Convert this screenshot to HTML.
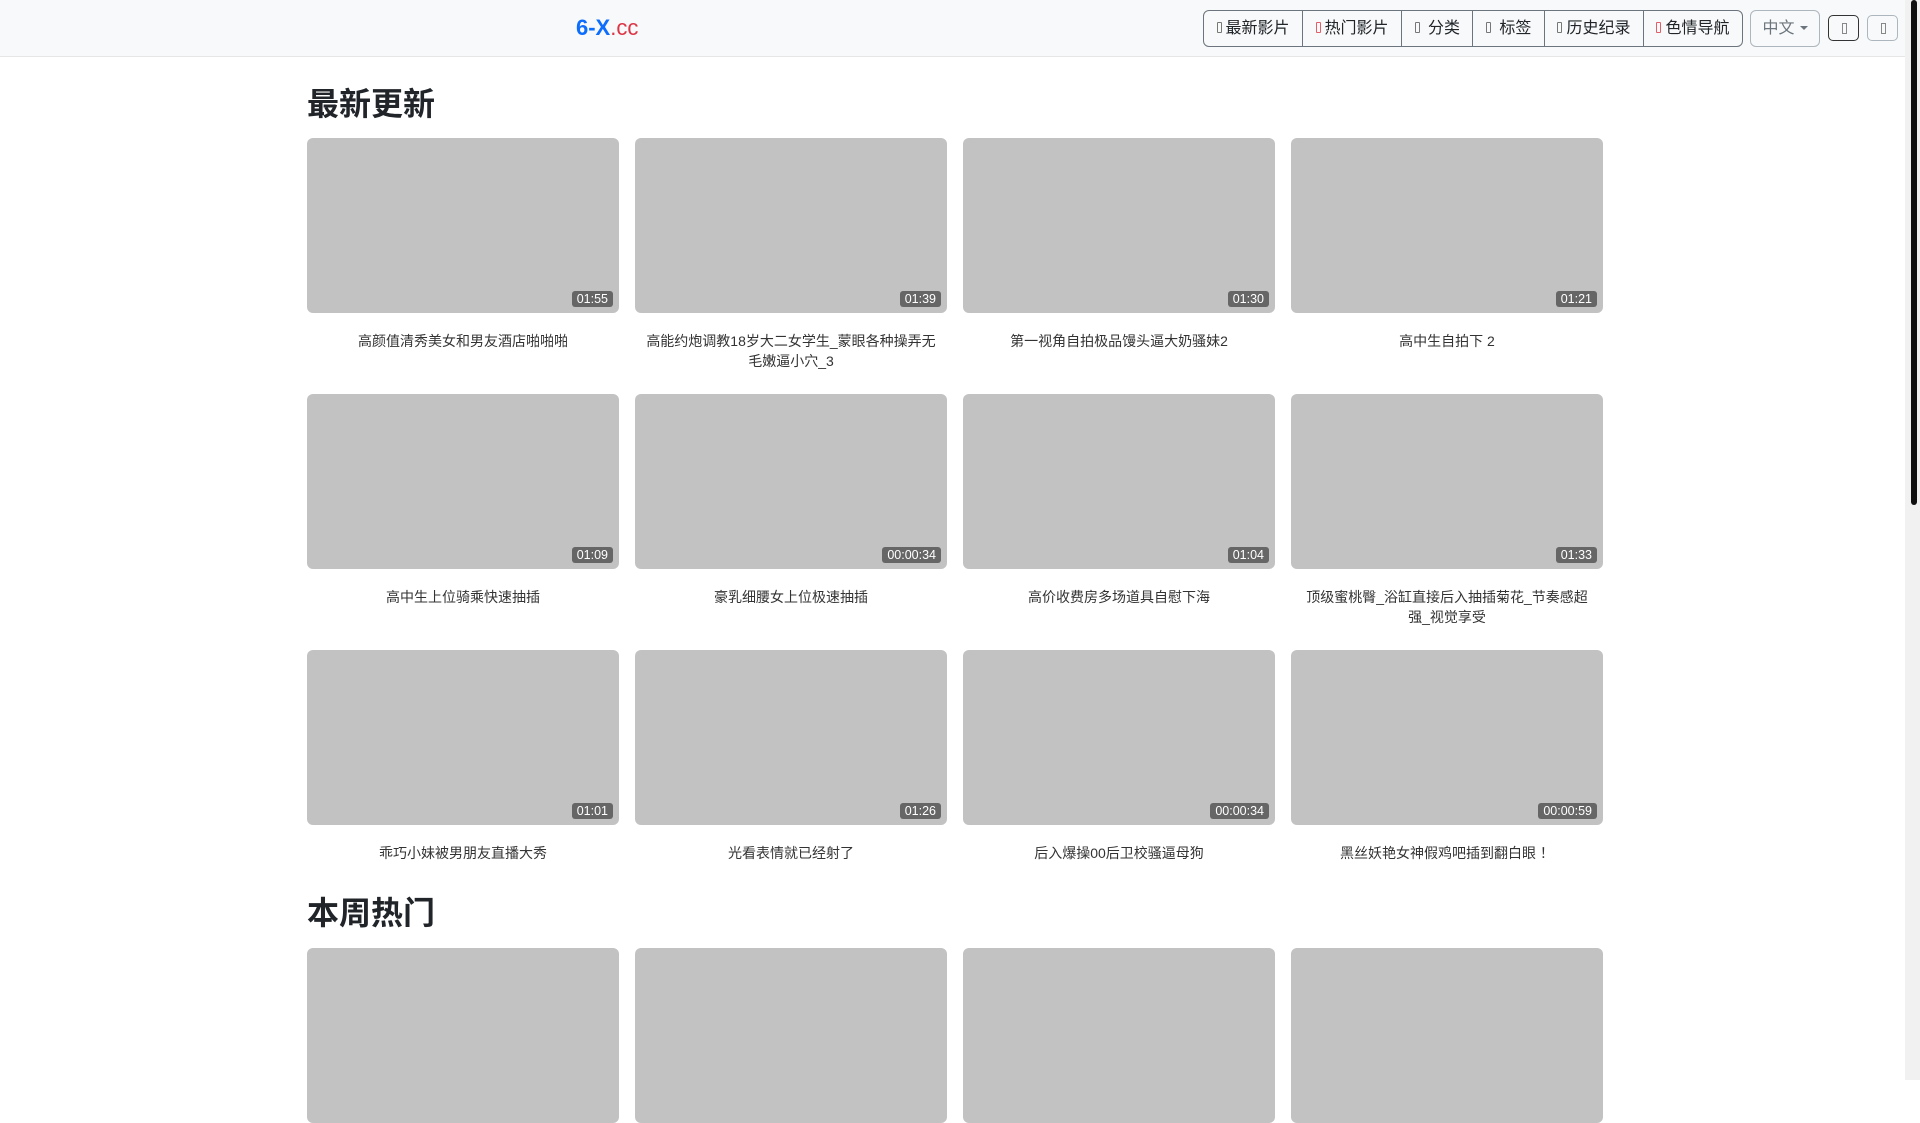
<!DOCTYPE html>
<html><head><meta charset="utf-8"><style>
*{box-sizing:border-box;margin:0;padding:0}
html,body{width:1920px;height:1080px;overflow:hidden;background:#fff;font-family:"Liberation Sans","Noto Sans CJK SC",sans-serif;color:#212529}
.hdr{position:absolute;left:0;top:0;width:1905px;height:57px;background:#f8f9fa;border-bottom:1px solid #e5e6e7}
.logo{position:absolute;left:576px;top:15px;font-size:22px;font-weight:bold;color:#0d6efd}
.logo span{color:#dc3545;font-weight:normal}
.nav{position:absolute;left:1203px;top:10px;height:37px;display:flex;border:1px solid #6c757d;border-radius:6px;overflow:hidden}
.nav div{padding:0 12.5px;line-height:35px;font-size:16px;border-left:1px solid #6c757d;color:#212529;white-space:nowrap}
.nav div:first-child{border-left:none}
.nav i{display:inline-block;width:5px;height:11px;border:1px solid #777;border-radius:1px;margin-right:4px;vertical-align:0}
.nav i.r{border-color:#e35d6a}
.lang{position:absolute;left:1750px;top:10px;width:70px;height:37px;border:1px solid #adb5bd;border-radius:6px;font-size:16px;color:#6c757d;line-height:35px;text-align:center}
.lang:after{content:"";display:inline-block;border-top:4px solid #6c757d;border-left:4px solid transparent;border-right:4px solid transparent;margin-left:5px;vertical-align:3px}
.sb{position:absolute;top:15px;width:31px;height:26px;border:1px solid #333;border-radius:5px}
.sb:after{content:"";position:absolute;left:13px;top:7px;width:3px;height:9px;border:1px solid #888}
.scroll{position:absolute;left:1905px;top:0;width:15px;height:1080px;background:#f1f1f1}
.thumb{position:absolute;left:1911px;top:0;width:6px;height:505px;background:#111;border-radius:3px}
h2{position:absolute;left:307px;font-size:32px;font-weight:bold;color:#212529}
.card{position:absolute;width:312px}
.img{height:175px;background:#c2c2c2;border-radius:6px;position:relative}
.d{position:absolute;right:6px;bottom:6px;background:#666;color:#fff;font-size:12.5px;padding:1px 5px;border-radius:3px}
.t{text-align:center;font-size:14px;line-height:20px;margin-top:18px;padding:0 10px;color:#333}
</style></head><body>
<div class="hdr">
<div class="logo">6-X<span>.cc</span></div>
<div class="nav"><div><i></i>最新影片</div><div><i class="r"></i>热门影片</div><div><i></i> 分类</div><div><i></i> 标签</div><div><i></i>历史纪录</div><div><i class="r"></i>色情导航</div></div>
<div class="lang">中文</div>
<div class="sb" style="left:1828px"></div>
<div class="sb" style="left:1867px;border-color:#adb5bd"></div>
</div>
<div class="scroll"></div><div class="thumb"></div>
<h2 style="top:79px">最新更新</h2>
<h2 style="top:888px">本周热门</h2>

<div class="card" style="left:307px;top:138px"><div class="img"><span class="d">01:55</span></div><div class="t">高颜值清秀美女和男友酒店啪啪啪</div></div>
<div class="card" style="left:635px;top:138px"><div class="img"><span class="d">01:39</span></div><div class="t">高能约炮调教18岁大二女学生_蒙眼各种操弄无毛嫩逼小穴_3</div></div>
<div class="card" style="left:963px;top:138px"><div class="img"><span class="d">01:30</span></div><div class="t">第一视角自拍极品馒头逼大奶骚妹2</div></div>
<div class="card" style="left:1291px;top:138px"><div class="img"><span class="d">01:21</span></div><div class="t">高中生自拍下 2</div></div>

<div class="card" style="left:307px;top:394px"><div class="img"><span class="d">01:09</span></div><div class="t">高中生上位骑乘快速抽插</div></div>
<div class="card" style="left:635px;top:394px"><div class="img"><span class="d">00:00:34</span></div><div class="t">豪乳细腰女上位极速抽插</div></div>
<div class="card" style="left:963px;top:394px"><div class="img"><span class="d">01:04</span></div><div class="t">高价收费房多场道具自慰下海</div></div>
<div class="card" style="left:1291px;top:394px"><div class="img"><span class="d">01:33</span></div><div class="t">顶级蜜桃臀_浴缸直接后入抽插菊花_节奏感超强_视觉享受</div></div>

<div class="card" style="left:307px;top:650px"><div class="img"><span class="d">01:01</span></div><div class="t">乖巧小妹被男朋友直播大秀</div></div>
<div class="card" style="left:635px;top:650px"><div class="img"><span class="d">01:26</span></div><div class="t">光看表情就已经射了</div></div>
<div class="card" style="left:963px;top:650px"><div class="img"><span class="d">00:00:34</span></div><div class="t">后入爆操00后卫校骚逼母狗</div></div>
<div class="card" style="left:1291px;top:650px"><div class="img"><span class="d">00:00:59</span></div><div class="t">黑丝妖艳女神假鸡吧插到翻白眼 ！</div></div>

<div class="card" style="left:307px;top:948px"><div class="img"></div></div>
<div class="card" style="left:635px;top:948px"><div class="img"></div></div>
<div class="card" style="left:963px;top:948px"><div class="img"></div></div>
<div class="card" style="left:1291px;top:948px"><div class="img"></div></div>
</body></html>
